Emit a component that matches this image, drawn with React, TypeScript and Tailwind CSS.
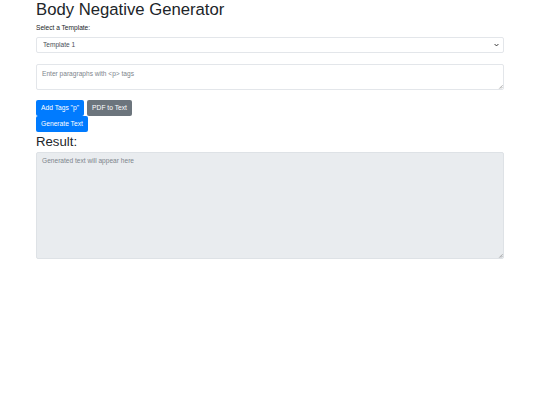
import { FC } from "react";

const Grip: FC = () => (
  <svg
    viewBox="0 0 6 6"
    className="absolute right-[1px] bottom-[1px] w-[5px] h-[5px] pointer-events-none"
  >
    <path d="M5.5 1.5 L1.5 5.5 M5.5 3.5 L3.5 5.5" stroke="#8a8a8a" strokeWidth="0.8" />
  </svg>
);

const App: FC = () => {
  return (
    <div className="w-full min-h-screen bg-white text-[#212529] font-[family-name:Liberation_Sans,Arial,sans-serif]">
      <div className="mx-9 w-[468px]">
        <h1 className="text-[16.7px] leading-[1.2] font-normal">
          Body Negative Generator
        </h1>
        <label className="block mt-[3px] text-[6.6px] leading-[1.5]">
          Select a Template:
        </label>
        <div className="relative mt-[4px]">
          <select className="block w-full h-4 pl-[6px] pr-4 text-[6.6px] text-[#495057] bg-white border border-[#e3e6ea] rounded-[2px] appearance-none">
            <option>Template 1</option>
            <option>Template 2</option>
          </select>
          <svg
            viewBox="0 0 8 6"
            className="absolute right-[5px] top-[6px] w-[5px] h-[4px] pointer-events-none"
          >
            <path d="M1 1.5 L4 4.5 L7 1.5" stroke="#333" strokeWidth="1.6" fill="none" />
          </svg>
        </div>
        <div className="relative mt-[11px]">
          <textarea
            className="block w-full h-[26px] px-[5px] py-[4px] text-[6.6px] leading-[1.5] border border-[#e3e6ea] rounded-[2px] resize-none placeholder:text-[#7d858c]"
            placeholder="Enter paragraphs with <p> tags"
          />
          <Grip />
        </div>
        <div className="mt-[10px] flex flex-wrap gap-[3px] w-[100px]">
          <button className="h-4 px-[5px] text-[6.7px] text-white bg-[#007bff] rounded-[2px]">
            Add Tags "p"
          </button>
          <button className="h-4 px-[5px] text-[6.7px] text-white bg-[#6c757d] rounded-[2px]">
            PDF to Text
          </button>
        </div>
        <button className="block mt-[0.5px] h-[16px] px-[5px] text-[6.7px] text-white bg-[#007bff] rounded-[2px]">
          Generate Text
        </button>
        <h3 className="mt-[2px] text-[13.2px] leading-[1.2] font-normal">
          Result:
        </h3>
        <div className="relative mt-[2px]">
          <textarea
            readOnly
            className="block w-full h-[107px] px-[5px] py-[3px] text-[6.6px] leading-[1.5] bg-[#e9ecef] border border-[#dee2e6] rounded-[2px] resize-none placeholder:text-[#7d858c]"
            placeholder="Generated text will appear here"
          />
          <Grip />
        </div>
      </div>
    </div>
  );
};

export default App;
